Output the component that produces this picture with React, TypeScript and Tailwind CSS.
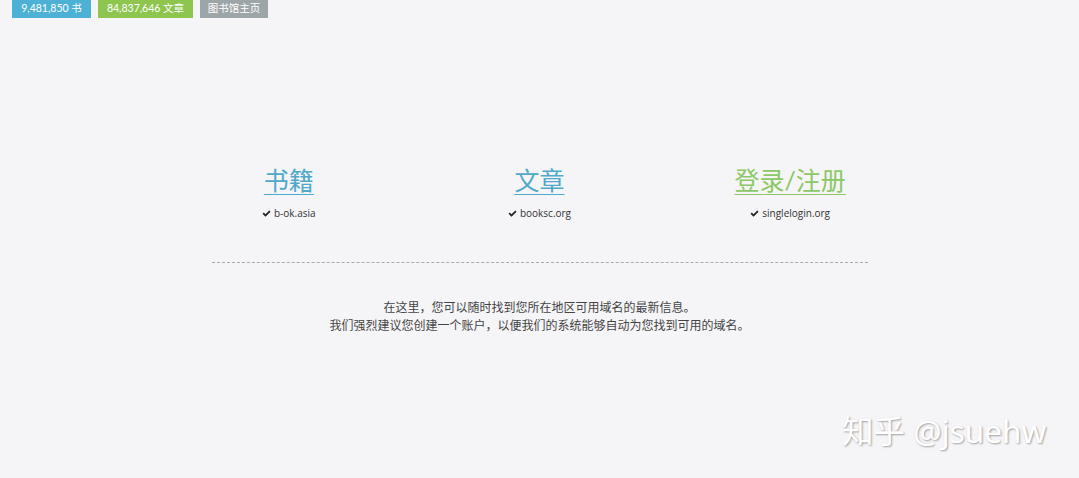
import React from 'react';

const cols = [
  { title: '书籍', domain: 'b-ok.asia', color: 'text-[#4ea9cb]' },
  { title: '文章', domain: 'booksc.org', color: 'text-[#4ea9cb]' },
  { title: '登录/注册', domain: 'singlelogin.org', color: 'text-[#8cc865]' },
];

const Check = () => (
  <svg viewBox="0 0 16 16" className="w-[9px] h-[9px] fill-[#222]">
    <path d="M1 8.5l2.2-2.2 3 3L13 2.5l2.2 2.2L6.2 13.7z" />
  </svg>
);

const App: React.FC = () => {
  return (
    <div
      className="relative w-[1079px] h-[478px] bg-[#f5f4f7] overflow-hidden"
      style={{ fontFamily: 'Lato, "Noto Sans CJK SC", sans-serif' }}
    >
      <div className="flex gap-[7px] pl-[12px] text-white text-[10.5px]">
        <span className="w-[79px] h-[18px] flex items-center justify-center bg-[#4cb1d4]">9,481,850 书</span>
        <span className="w-[95px] h-[18px] flex items-center justify-center bg-[#8dc54f]">84,837,646 文章</span>
        <span className="w-[68px] h-[18px] flex items-center justify-center bg-[#9ca5a7]">图书馆主页</span>
      </div>

      <div className="mt-[146px] mx-auto w-[752px] grid grid-cols-3">
        {cols.map((c) => (
          <div key={c.title} className="flex flex-col items-center">
            <a className={`text-[25px] leading-[32px] underline underline-offset-[4px] decoration-[1px] ${c.color}`}>
              {c.title}
            </a>
            <div
              className="mt-[10px] flex items-center gap-[3px] text-[10px] text-[#333]"
              style={{ fontFamily: '"Open Sans", sans-serif' }}
            >
              <Check />
              <span>{c.domain}</span>
            </div>
          </div>
        ))}
      </div>

      <div className="mt-[41px] mx-auto w-[656px] border-t border-dashed border-[#aaa]" />

      <div className="mt-[36px] text-center text-[12px] leading-[18px] text-[#444]">
        <p>在这里，您可以随时找到您所在地区可用域名的最新信息。</p>
        <p>我们强烈建议您创建一个账户，以便我们的系统能够自动为您找到可用的域名。</p>
      </div>

      <div
        className="absolute left-[842px] top-[407px] text-[31.5px] text-white [text-shadow:1px_1px_2px_rgba(0,0,0,0.35)]"
        style={{ fontFamily: '"Noto Sans", "Noto Sans CJK SC", sans-serif' }}
      >
        知乎 @jsuehw
      </div>
    </div>
  );
};

export default App;
